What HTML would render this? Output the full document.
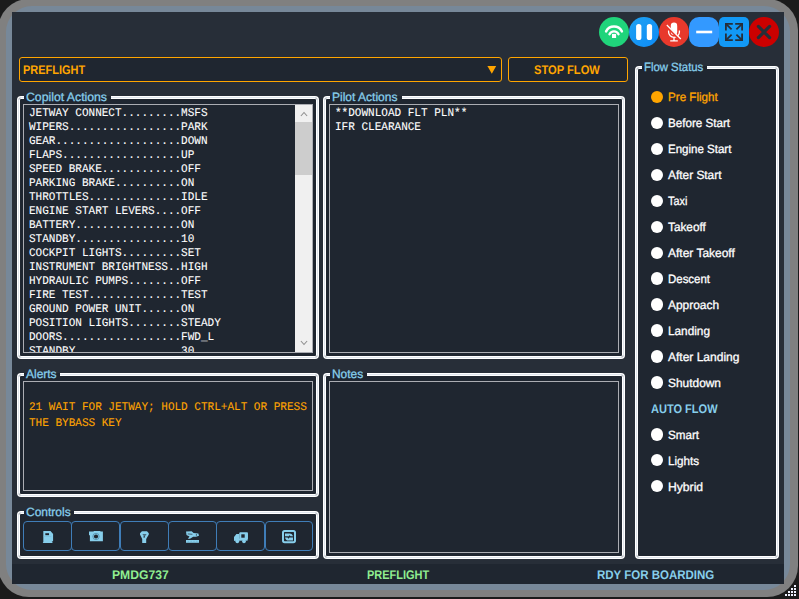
<!DOCTYPE html>
<html lang="en"><head><meta charset="utf-8"><title>Flow Status - PMDG737</title>
<style>
html,body{margin:0;padding:0}
body{width:799px;height:599px;overflow:hidden;position:relative;background:#1b1b1b;font-family:"Liberation Sans", sans-serif;text-rendering:geometricPrecision}
.abs,.t,.gb,.hd,.gap,.box,.rb,.btn,.cb{position:absolute}
#frame{left:-2px;top:-1px;width:800px;height:598px;border-radius:31px;background:#808080}
#blue{left:6px;top:6px;width:784px;height:584px;border-radius:26px;background:#778899}
#inner{left:12px;top:12px;width:772px;height:572px;background:#272e38}
#status{left:12px;top:564px;width:772px;height:20px;background:#1f2630}
.t{white-space:pre;line-height:16px;transform-origin:0 0}
.gb{box-sizing:border-box;border:1px solid #dfe6ee;box-shadow:0 0 0 1px #fff, inset 0 0 0 1px #fff;border-radius:3px;background:#1f2630}
.gap{background:#1f2630;height:3px}
.gapt{position:absolute;background:#272e38;height:8px}
.box{box-sizing:border-box;border:1px solid #abadb3;background:#1f2630;overflow:hidden}
.mono{position:absolute;font-family:"Liberation Mono", monospace;font-size:11.7px;line-height:14px;white-space:pre;color:#fff;-webkit-text-stroke:0.1px currentColor;transform:scaleX(0.943);transform-origin:0 0}
.rb{width:12.4px;height:12.4px;border-radius:50%;background:#fff}
.btn{box-sizing:border-box;border:1px solid #3f7db8;border-radius:4px;background:#1f2630}
.cb{width:30px;height:30px}
svg{position:absolute;overflow:visible}

</style></head><body>
<div id="frame" class="abs"></div>
<div id="blue" class="abs"></div>
<div id="inner" class="abs"></div>
<div id="status" class="abs"></div>
<div class="gb" style="left:18px;top:97px;width:300px;height:261px"></div>
<div class="gap" style="left:24px;top:96px;width:87px"></div>
<div class="gb" style="left:324px;top:97px;width:300px;height:261px"></div>
<div class="gap" style="left:330px;top:96px;width:72px"></div>
<div class="gb" style="left:18px;top:374px;width:300px;height:122px"></div>
<div class="gap" style="left:24px;top:373px;width:36px"></div>
<div class="gb" style="left:324px;top:374px;width:300px;height:184px"></div>
<div class="gap" style="left:330px;top:373px;width:37px"></div>
<div class="gb" style="left:18px;top:512px;width:300px;height:46px"></div>
<div class="gap" style="left:24px;top:511px;width:50px"></div>
<div class="gb" style="left:636px;top:67px;width:142px;height:491px"></div>
<div class="gap" style="left:642px;top:66px;width:65px"></div>
<div class="abs" style="left:19px;top:57px;width:483px;height:25px;box-sizing:border-box;border:1px solid #ffa500;border-radius:3px;background:#1f2630"></div>
<svg style="left:487px;top:66px" width="10" height="8" viewBox="0 0 10 8"><path d="M0.4 0H9.2L4.8 7.8Z" fill="#ffa500"/></svg>
<div class="abs" style="left:507.5px;top:57px;width:120.5px;height:25px;box-sizing:border-box;border:1px solid #ffa500;border-radius:3px;background:#1f2630"></div>
<div class="box" style="left:23px;top:104px;width:290px;height:249px">
<div class="mono" style="left:4.6px;top:0.8px">JETWAY CONNECT.........MSFS
WIPERS.................PARK
GEAR...................DOWN
FLAPS..................UP
SPEED BRAKE............OFF
PARKING BRAKE..........ON
THROTTLES..............IDLE
ENGINE START LEVERS....OFF
BATTERY................ON
STANDBY................10
COCKPIT LIGHTS.........SET
INSTRUMENT BRIGHTNESS..HIGH
HYDRAULIC PUMPS........OFF
FIRE TEST..............TEST
GROUND POWER UNIT......ON
POSITION LIGHTS........STEADY
DOORS..................FWD_L
STANDBY................30</div>
<div class="abs" style="left:271px;top:0;width:17px;height:247px;background:#f0f0f0"></div>
<div class="abs" style="left:271px;top:17px;width:17px;height:52.5px;background:#cdcdcd"></div>
<svg style="left:274.5px;top:5px" width="10" height="7" viewBox="0 0 10 7"><path d="M1.9 6L5 2.5L8.1 6" fill="none" stroke="#909090" stroke-width="1.1"/></svg>
<svg style="left:274.5px;top:235.3px" width="10" height="7" viewBox="0 0 10 7"><path d="M1.9 1L5 4.5L8.1 1" fill="none" stroke="#909090" stroke-width="1.1"/></svg>
</div>
<div class="box" style="left:329px;top:104px;width:290px;height:249px">
<div class="mono" style="left:4.6px;top:0.8px">**DOWNLOAD FLT PLN**
IFR CLEARANCE</div>
</div>
<div class="box" style="left:23px;top:381px;width:290px;height:110px">
<div class="mono" style="left:4.6px;top:16.8px;line-height:16px;color:#ffa500">21 WAIT FOR JETWAY; HOLD CTRL+ALT OR PRESS
THE BYBASS KEY</div>
</div>
<div class="box" style="left:329px;top:381px;width:290px;height:172px"></div>
<div class="btn" style="left:23px;top:521px;width:48.9px;height:30px"></div>
<div class="btn" style="left:71.3px;top:521px;width:48.9px;height:30px"></div>
<div class="btn" style="left:119.6px;top:521px;width:49.0px;height:30px"></div>
<div class="btn" style="left:168px;top:521px;width:48.8px;height:30px"></div>
<div class="btn" style="left:216.2px;top:521px;width:48.9px;height:30px"></div>
<div class="btn" style="left:264.5px;top:521px;width:48.9px;height:30px"></div>
<svg style="left:42.8px;top:530.8px" width="10.2" height="12.2" viewBox="0 0 10.5 12.6"><path d="M0.3 0H7.7L10.4 3V10.7L9 10.9L10.1 12.5H-0.3L0.3 11.5Z" fill="#87ceeb"/><rect x="2.4" y="2.3" width="3.8" height="2" fill="#1f2630"/><rect x="0.5" y="5.7" width="8" height="0.5" fill="#74b8d6"/></svg>
<svg style="left:89px;top:531.3px" width="14" height="10.4" viewBox="0 0 14 10.4"><path d="M0 0.6H4.7V0H11.4V0.6H13.9V10.3H0.9V4.2H0Z" fill="#87ceeb"/><circle cx="7" cy="5.5" r="3.2" fill="none" stroke="#4f8aa8" stroke-width="0.8"/><ellipse cx="7" cy="5.5" rx="2.1" ry="2.1" fill="#1f2630"/></svg>
<svg style="left:140px;top:530.7px" width="9" height="12.2" viewBox="0 0 9 12.2"><path d="M1.9 0.2H7L8.8 2.2V3.6L6.2 8V12H2.2V8L0 3.6V2.2Z" fill="#87ceeb"/><path d="M2.4 2.9H6.6L4.5 6Z" fill="#1f2630" opacity="0.6"/><ellipse cx="4.2" cy="5.9" rx="0.9" ry="0.6" fill="#1f2630"/></svg>
<svg style="left:186px;top:531px" width="13.2" height="12" viewBox="0 0 13.2 12"><path d="M0 0.4L5.6 0.2L7.6 2L12.4 2.6L13 4.8L10 5.7H7.2L4 7.7H1.8L3.5 5.4L0.5 4Z" fill="#87ceeb"/><path d="M1.8 2.9L6.4 3.3" stroke="#1f2630" stroke-width="0.8" opacity="0.8"/><circle cx="10.4" cy="3.9" r="0.6" fill="#1f2630"/><rect x="0" y="9" width="13" height="2.8" fill="#87ceeb"/><path d="M1.8 10.4H11.4" stroke="#5e9fbd" stroke-width="0.6" stroke-dasharray="0.9 2"/></svg>
<svg style="left:234px;top:532px" width="14.2" height="11.2" viewBox="0 0 14.2 11.2"><rect x="5.3" y="0.2" width="8.7" height="7.2" rx="1" fill="#87ceeb"/><rect x="7.3" y="2.3" width="3.4" height="3.4" fill="#1f2630"/><path d="M5.4 2H2.4L0 5V8.6H5.4Z" fill="#87ceeb"/><rect x="0" y="6.6" width="13.6" height="2.1" fill="#87ceeb"/><circle cx="3.3" cy="9.3" r="1.85" fill="#87ceeb"/><circle cx="10" cy="9.3" r="1.85" fill="#87ceeb"/></svg>
<svg style="left:282px;top:529.8px" width="14" height="13.2" viewBox="0 0 14 13.2"><rect x="1" y="1" width="12" height="11.2" rx="1.6" fill="none" stroke="#87ceeb" stroke-width="2"/><path d="M3 3.4H7.5C9.5 3.4 10.6 4.5 11 6.2H8.5L7.6 5L7 6.2H3Z" fill="#87ceeb"/><path d="M3 7.4H5.5L6.6 8.8L7.4 7.4H11V10.5H6.5C4.5 10.5 3.4 9.4 3 7.4Z" fill="#87ceeb"/></svg>
<div class="rb" style="left:650.5px;top:90.7px;background:#ffa500"></div>
<div class="rb" style="left:650.5px;top:116.7px"></div>
<div class="rb" style="left:650.5px;top:142.6px"></div>
<div class="rb" style="left:650.5px;top:168.6px"></div>
<div class="rb" style="left:650.5px;top:194.5px"></div>
<div class="rb" style="left:650.5px;top:220.5px"></div>
<div class="rb" style="left:650.5px;top:246.5px"></div>
<div class="rb" style="left:650.5px;top:272.4px"></div>
<div class="rb" style="left:650.5px;top:298.4px"></div>
<div class="rb" style="left:650.5px;top:324.3px"></div>
<div class="rb" style="left:650.5px;top:350.3px"></div>
<div class="rb" style="left:650.5px;top:376.3px"></div>
<div class="rb" style="left:650.5px;top:428.2px"></div>
<div class="rb" style="left:650.5px;top:454.1px"></div>
<div class="rb" style="left:650.5px;top:480.1px"></div>
<svg class="cb" style="left:598.9px;top:17px" width="30" height="30" viewBox="0 0 30 30"><circle cx="15" cy="15" r="15" fill="#20d47b"/><path d="M7.1 14.4A8.9 8.9 0 0 1 22.9 14.4" fill="none" stroke="#fff" stroke-width="2.5" stroke-linecap="round"/><path d="M10.5 17.2A5 5 0 0 1 19.5 17.2" fill="none" stroke="#fff" stroke-width="2.4" stroke-linecap="round"/><rect x="13" y="16.9" width="4.1" height="4.1" fill="#fff"/></svg>
<svg class="cb" style="left:629.1px;top:17px" width="30" height="30" viewBox="0 0 30 30"><defs><linearGradient id="pg" x1="0" y1="0" x2="1" y2="1"><stop offset="0" stop-color="#1fa2f2"/><stop offset="1" stop-color="#0d8bf7"/></linearGradient></defs><circle cx="15" cy="15" r="15" fill="url(#pg)"/><rect x="7.1" y="6.9" width="5.3" height="16.2" rx="2.6" fill="#fff"/><rect x="17.8" y="6.9" width="5.3" height="16.2" rx="2.6" fill="#fff"/></svg>
<svg class="cb" style="left:659px;top:17px" width="30" height="30" viewBox="0 0 30 30"><circle cx="15" cy="15" r="15" fill="#e8392c"/><rect x="11.8" y="5.6" width="6.4" height="12.4" rx="3.2" fill="#fff"/><path d="M9.6 13.6V15A5.4 5.4 0 0 0 20.4 15V13.6" fill="none" stroke="#fff" stroke-width="1.3"/><path d="M15 20.4V23.6M11.2 23.8H18.8" fill="none" stroke="#fff" stroke-width="1.3"/><path d="M7.2 8.6L21 22.6" stroke="#e8392c" stroke-width="2.6"/><path d="M7.8 8L21.8 22" stroke="#fff" stroke-width="1.2"/></svg>
<svg class="cb" style="left:689px;top:17px" width="30" height="30" viewBox="0 0 30 30"><rect x="0" y="0" width="30" height="30" rx="10" fill="#3399ff"/><rect x="7.2" y="13.7" width="16" height="2.6" fill="#fff"/></svg>
<svg class="cb" style="left:719.1px;top:17px" width="30" height="30" viewBox="0 0 30 30"><rect x="0" y="0" width="30" height="30" rx="5" fill="#1299f6"/><g fill="none" stroke="#272e38" stroke-width="1.8"><path d="M13.8 6.9H6.9V13.6M16.2 6.9H23.1V13.6M13.8 23.1H6.9V16.4M16.2 23.1H23.1V16.4"/><path d="M7.2 7.2L12.6 12.4M22.8 7.2L17.4 12.4M7.2 22.8L12.6 17.6M22.8 22.8L17.4 17.6"/></g></svg>
<svg class="cb" style="left:749.2px;top:17px" width="30" height="30" viewBox="0 0 30 30"><circle cx="15" cy="15" r="15" fill="#cc0000"/><path d="M9.4 9.4L20.6 20.6M20.6 9.4L9.4 20.6" stroke="#272e38" stroke-width="3.2" stroke-linecap="round"/></svg>
<span class="t" style="left:23.15px;top:62.07px;font-size:12.5px;font-weight:bold;color:#ffa500;transform:scaleX(0.8773)">PREFLIGHT</span>
<span class="t" style="left:534.40px;top:61.77px;font-size:12.5px;font-weight:bold;color:#ffa500;transform:scaleX(0.8922)">STOP FLOW</span>
<span class="t" style="left:25.70px;top:89.04px;font-size:12px;font-weight:normal;color:#87ceeb;-webkit-text-stroke:0.3px #87ceeb;transform:scaleX(1.0203)">Copilot Actions</span>
<span class="t" style="left:332.00px;top:89.04px;font-size:12px;font-weight:normal;color:#87ceeb;-webkit-text-stroke:0.3px #87ceeb;transform:scaleX(1.0011)">Pilot Actions</span>
<span class="t" style="left:643.50px;top:59.34px;font-size:12px;font-weight:normal;color:#87ceeb;-webkit-text-stroke:0.3px #87ceeb;transform:scaleX(0.9457)">Flow Status</span>
<span class="t" style="left:25.50px;top:365.94px;font-size:12px;font-weight:normal;color:#87ceeb;-webkit-text-stroke:0.3px #87ceeb;transform:scaleX(0.9971)">Alerts</span>
<span class="t" style="left:331.80px;top:365.94px;font-size:12px;font-weight:normal;color:#87ceeb;-webkit-text-stroke:0.3px #87ceeb;transform:scaleX(0.9917)">Notes</span>
<span class="t" style="left:25.50px;top:504.14px;font-size:12px;font-weight:normal;color:#87ceeb;-webkit-text-stroke:0.3px #87ceeb;transform:scaleX(1.0003)">Controls</span>
<span class="t" style="left:650.70px;top:400.77px;font-size:12.5px;font-weight:bold;color:#87ceeb;transform:scaleX(0.8827)">AUTO FLOW</span>
<span class="t" style="left:112.40px;top:566.52px;font-size:12.5px;font-weight:bold;color:#90ee90;transform:scaleX(0.9707)">PMDG737</span>
<span class="t" style="left:366.80px;top:566.52px;font-size:12.5px;font-weight:bold;color:#90ee90;transform:scaleX(0.8787)">PREFLIGHT</span>
<span class="t" style="left:596.80px;top:566.52px;font-size:12.5px;font-weight:bold;color:#87ceeb;transform:scaleX(0.9195)">RDY FOR BOARDING</span>
<span class="t" style="left:667.60px;top:89.44px;font-size:12px;font-weight:normal;color:#ffa500;-webkit-text-stroke:0.3px #ffa500;transform:scaleX(0.9696)">Pre Flight</span>
<span class="t" style="left:667.60px;top:115.40px;font-size:12px;font-weight:normal;color:#ffffff;-webkit-text-stroke:0.3px #ffffff;transform:scaleX(0.9698)">Before Start</span>
<span class="t" style="left:667.60px;top:141.36px;font-size:12px;font-weight:normal;color:#ffffff;-webkit-text-stroke:0.3px #ffffff;transform:scaleX(0.9599)">Engine Start</span>
<span class="t" style="left:667.60px;top:167.32px;font-size:12px;font-weight:normal;color:#ffffff;-webkit-text-stroke:0.3px #ffffff;transform:scaleX(0.9902)">After Start</span>
<span class="t" style="left:667.60px;top:193.28px;font-size:12px;font-weight:normal;color:#ffffff;-webkit-text-stroke:0.3px #ffffff;transform:scaleX(0.9042)">Taxi</span>
<span class="t" style="left:667.60px;top:219.24px;font-size:12px;font-weight:normal;color:#ffffff;-webkit-text-stroke:0.3px #ffffff;transform:scaleX(0.9822)">Takeoff</span>
<span class="t" style="left:667.60px;top:245.20px;font-size:12px;font-weight:normal;color:#ffffff;-webkit-text-stroke:0.3px #ffffff;transform:scaleX(0.9979)">After Takeoff</span>
<span class="t" style="left:667.60px;top:271.16px;font-size:12px;font-weight:normal;color:#ffffff;-webkit-text-stroke:0.3px #ffffff;transform:scaleX(0.9539)">Descent</span>
<span class="t" style="left:667.60px;top:297.12px;font-size:12px;font-weight:normal;color:#ffffff;-webkit-text-stroke:0.3px #ffffff;transform:scaleX(0.9946)">Approach</span>
<span class="t" style="left:667.60px;top:323.08px;font-size:12px;font-weight:normal;color:#ffffff;-webkit-text-stroke:0.3px #ffffff;transform:scaleX(0.9832)">Landing</span>
<span class="t" style="left:667.60px;top:349.04px;font-size:12px;font-weight:normal;color:#ffffff;-webkit-text-stroke:0.3px #ffffff;transform:scaleX(1.0001)">After Landing</span>
<span class="t" style="left:667.60px;top:375.00px;font-size:12px;font-weight:normal;color:#ffffff;-webkit-text-stroke:0.3px #ffffff;transform:scaleX(0.9930)">Shutdown</span>
<span class="t" style="left:667.60px;top:426.92px;font-size:12px;font-weight:normal;color:#ffffff;-webkit-text-stroke:0.3px #ffffff;transform:scaleX(0.9714)">Smart</span>
<span class="t" style="left:667.60px;top:452.88px;font-size:12px;font-weight:normal;color:#ffffff;-webkit-text-stroke:0.3px #ffffff;transform:scaleX(0.9709)">Lights</span>
<span class="t" style="left:667.60px;top:478.84px;font-size:12px;font-weight:normal;color:#ffffff;-webkit-text-stroke:0.3px #ffffff;transform:scaleX(1.0119)">Hybrid</span>
<svg style="left:0;top:0" width="799" height="599" viewBox="0 0 799 599" fill="#eef2ff"><rect x="794" y="585" width="2" height="2"/><rect x="791" y="588" width="2" height="2"/><rect x="794" y="588" width="2" height="2"/><rect x="788" y="591" width="2" height="2"/><rect x="791" y="591" width="2" height="2"/><rect x="794" y="591" width="2" height="2"/><rect x="785" y="594" width="2" height="2"/><rect x="788" y="594" width="2" height="2"/><rect x="791" y="594" width="2" height="2"/><rect x="794" y="594" width="2" height="2"/></svg>
</body></html>
